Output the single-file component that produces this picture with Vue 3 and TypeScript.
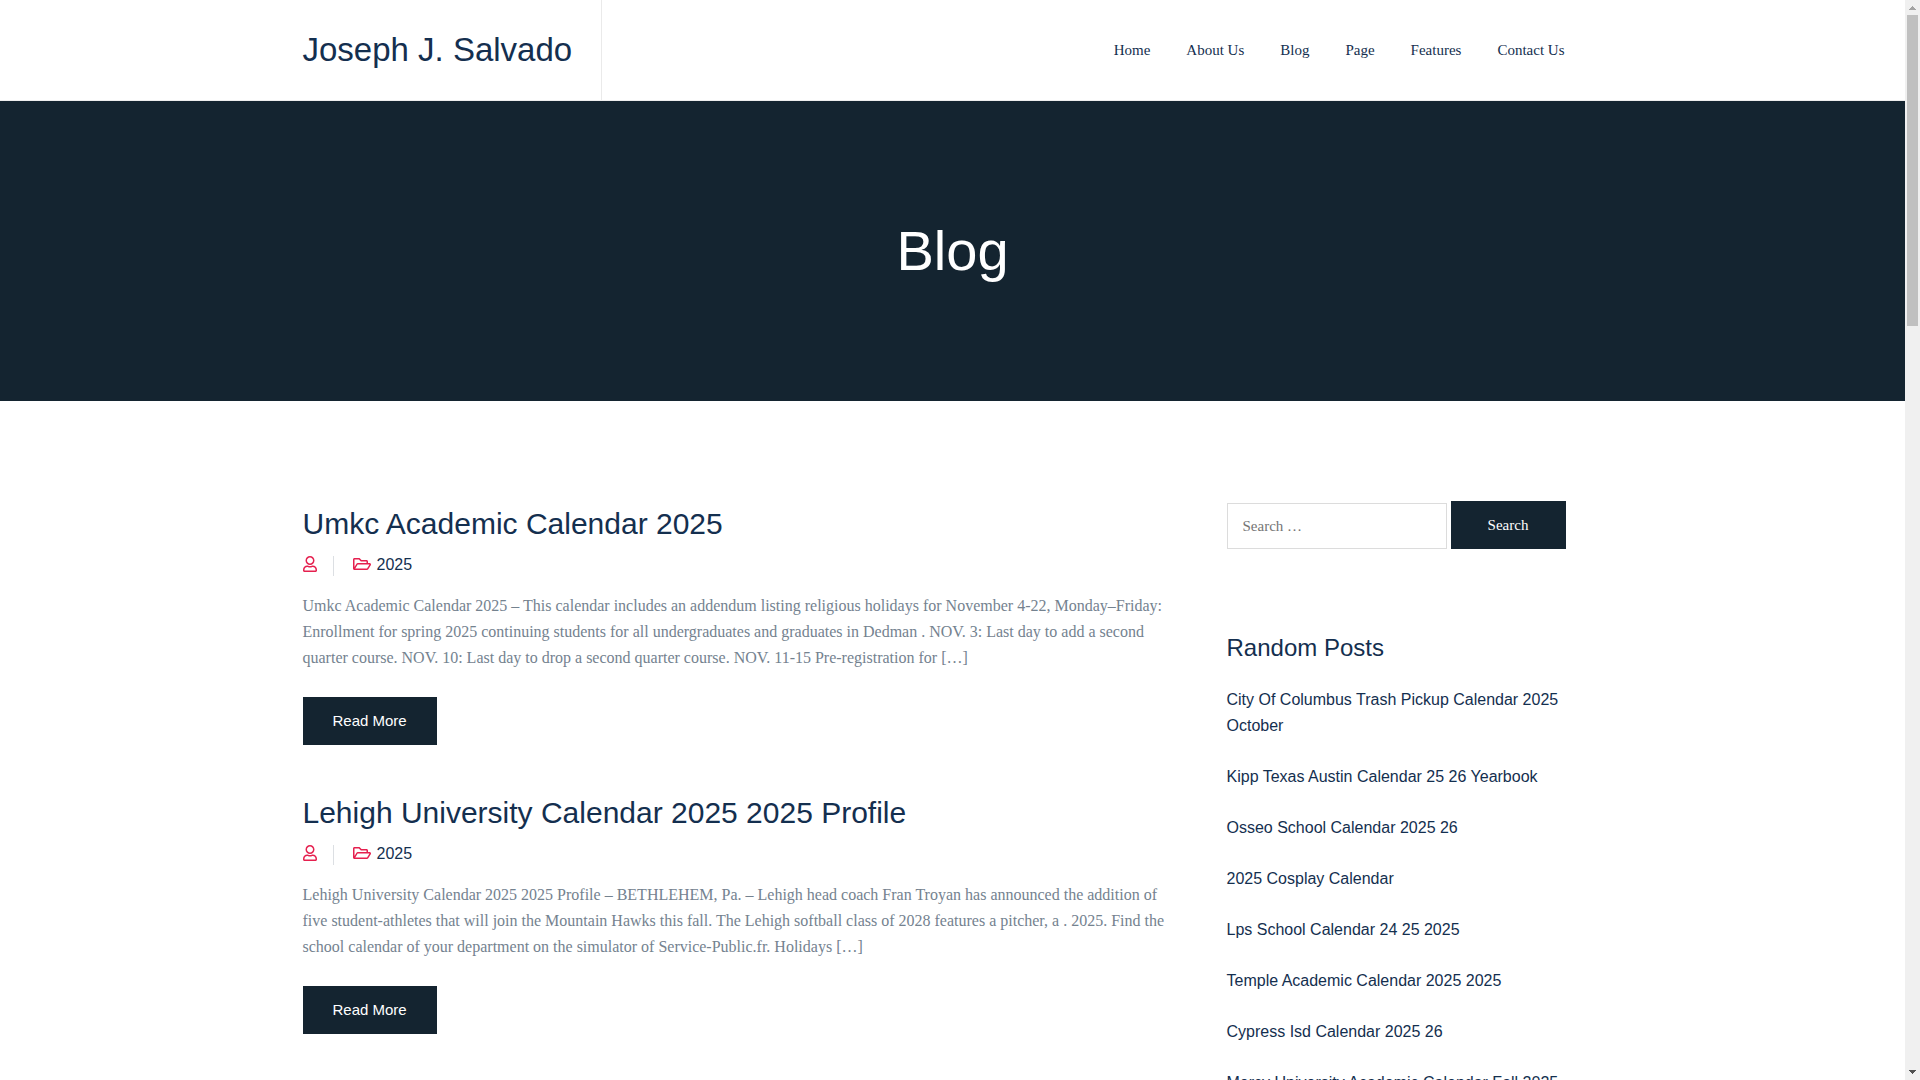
<script setup lang="ts">
import { ref } from 'vue'

interface Post {
  title: string
  category: string
  excerpt: string
}

const query = ref('')

const menu: string[] = ['Home', 'About Us', 'Blog', 'Page', 'Features', 'Contact Us']

const posts: Post[] = [
  {
    title: 'Umkc Academic Calendar 2025',
    category: '2025',
    excerpt:
      'Umkc Academic Calendar 2025 – This calendar includes an addendum listing religious holidays for November 4-22, Monday–Friday: Enrollment for spring 2025 continuing students for all undergraduates and graduates in Dedman . NOV. 3: Last day to add a second quarter course. NOV. 10: Last day to drop a second quarter course. NOV. 11-15 Pre-registration for […]',
  },
  {
    title: 'Lehigh University Calendar 2025 2025 Profile',
    category: '2025',
    excerpt:
      'Lehigh University Calendar 2025 2025 Profile – BETHLEHEM, Pa. – Lehigh head coach Fran Troyan has announced the addition of five student-athletes that will join the Mountain Hawks this fall. The Lehigh softball class of 2028 features a pitcher, a . 2025. Find the school calendar of your department on the simulator of Service-Public.fr. Holidays […]',
  },
]

const randomPosts: string[] = [
  'City Of Columbus Trash Pickup Calendar 2025 October',
  'Kipp Texas Austin Calendar 25 26 Yearbook',
  'Osseo School Calendar 2025 26',
  '2025 Cosplay Calendar',
  'Lps School Calendar 24 25 2025',
  'Temple Academic Calendar 2025 2025',
  'Cypress Isd Calendar 2025 26',
  'Mercy University Academic Calendar Fall 2025',
]
</script>

<template>
  <div class="window">
    <div class="page">
      <header class="header">
        <div class="container header-row">
          <div class="brand"><a href="#">Joseph J. Salvado</a></div>
          <nav class="menu" aria-label="Main">
            <a v-for="item in menu" :key="item" href="#">{{ item }}</a>
          </nav>
        </div>
      </header>

      <section class="hero">
        <h1>Blog</h1>
      </section>

      <div class="container content">
        <main class="posts">
          <article v-for="post in posts" :key="post.title" class="post">
            <h2><a href="#">{{ post.title }}</a></h2>
            <div class="meta">
              <a class="author" href="#" aria-label="Author">
                <svg class="icon-user" viewBox="0 0 448 512" aria-hidden="true">
                  <path d="M313.6 304c-28.7 0-42.5 16-89.6 16-47.1 0-60.8-16-89.6-16C60.2 304 0 364.2 0 438.4V464c0 26.5 21.5 48 48 48h352c26.5 0 48-21.5 48-48v-25.6c0-74.2-60.2-134.4-134.4-134.4zM400 464H48v-25.6c0-47.6 38.8-86.4 86.4-86.4 14.6 0 38.3 16 89.6 16 51.7 0 74.9-16 89.6-16 47.6 0 86.4 38.8 86.4 86.4V464zM224 288c79.5 0 144-64.5 144-144S303.5 0 224 0 80 64.5 80 144s64.5 144 144 144zm0-240c52.9 0 96 43.1 96 96s-43.1 96-96 96-96-43.1-96-96 43.1-96 96-96z" />
                </svg>
              </a>
              <span class="divider"></span>
              <svg class="icon-folder" viewBox="0 0 576 512" aria-hidden="true">
                <path d="M527.9 224H480v-48c0-26.5-21.5-48-48-48H272l-64-64H48C21.5 64 0 85.5 0 112v288c0 26.5 21.5 48 48 48h400c16.5 0 31.9-8.5 40.7-22.6l79.9-128c20-31.9-3-73.4-40.7-73.4zM48 118c0-3.3 2.7-6 6-6h134.1l64 64H426c3.3 0 6 2.7 6 6v42H152c-16.8 0-32.4 8.8-41.1 23.2L48 351.4zm400 282H72l77.2-128H528z" />
              </svg>
              <a href="#">{{ post.category }}</a>
            </div>
            <p>{{ post.excerpt }}</p>
            <a class="read-more" href="#">Read More</a>
          </article>
        </main>

        <aside class="sidebar">
          <form class="search" role="search" @submit.prevent>
            <input v-model="query" type="search" placeholder="Search …" aria-label="Search for" />
            <button type="submit">Search</button>
          </form>
          <h3>Random Posts</h3>
          <ul>
            <li v-for="title in randomPosts" :key="title"><a href="#">{{ title }}</a></li>
          </ul>
        </aside>
      </div>
    </div>

    <div class="scrollbar" aria-hidden="true">
      <svg class="arrow" viewBox="0 0 15 15" shape-rendering="crispEdges">
        <path fill="#a3a3a3" d="M7 6h1v1h1v1h1v1h1v1H4V9h1V8h1V7h1z" />
      </svg>
      <div class="track"><div class="thumb"></div></div>
      <svg class="arrow" viewBox="0 0 15 15" shape-rendering="crispEdges">
        <path fill="#505050" d="M4 5h7v1h-1v1H9v1H8v1H7V8H6V7H5V6H4z" />
      </svg>
    </div>
  </div>
</template>

<style>
body {
  margin: 0;
  overflow: hidden;
}
</style>

<style scoped>
* {
  box-sizing: border-box;
}

h1,
h2,
h3,
p,
ul {
  margin: 0;
  padding: 0;
  font-weight: 400;
}

a {
  color: inherit;
  text-decoration: none;
}

.window {
  display: flex;
  height: 100vh;
  overflow: hidden;
  background: #fff;
  color: #142f4f;
  font: 16px/26px "Liberation Sans", Arial, sans-serif;
}

.page {
  flex: 1;
  min-width: 0;
  overflow: hidden;
}

.container {
  max-width: 1300px;
  margin: 0 auto;
}

.header {
  border-bottom: 1px solid #eee;
}

.header-row {
  display: flex;
  justify-content: space-between;
  min-height: 100px;
}

.brand {
  display: flex;
  align-items: center;
  padding-right: 29px;
  border-right: 1px solid #eaeaea;
  font-size: 33px;
  line-height: 40px;
}

.menu {
  display: flex;
  align-items: center;
  gap: 36px;
  padding-right: 38px;
  font: 15px/26px "Liberation Serif", "Times New Roman", serif;
}

.hero {
  display: flex;
  align-items: center;
  justify-content: center;
  min-height: 300px;
  background: #142430;
  color: #fff;
}

.hero h1 {
  font-size: 56px;
  line-height: 70px;
}

.content {
  display: flex;
  gap: 54px;
  padding-top: 100px;
}

.posts {
  flex: 1;
  min-width: 0;
}

.post {
  margin-bottom: 45px;
}

.post h2 {
  font-size: 30px;
  line-height: 45px;
}

.meta {
  display: flex;
  align-items: center;
  margin: 6px 0 15px;
}

.meta svg {
  display: block;
  height: 16px;
  margin-bottom: 2px;
  fill: #e5204f;
}

.icon-user {
  width: 14px;
}

.icon-folder {
  width: 18px;
  margin-right: 6px;
}

.divider {
  width: 1px;
  height: 20px;
  margin: 2px 19px 0 16px;
  background: #dcdfe3;
}

.post p {
  margin-bottom: 26px;
  color: #74828f;
  font-family: "Liberation Serif", "Times New Roman", serif;
}

.read-more {
  display: inline-block;
  padding: 0 30px;
  background: #142430;
  color: #fff;
  font-size: 15px;
  line-height: 48px;
  vertical-align: top;
}

.sidebar {
  width: 376px;
}

.search {
  display: flex;
  align-items: flex-end;
  gap: 4px;
  margin-bottom: 81px;
  padding-right: 37px;
}

.search input,
.search button {
  margin: 0;
  border-radius: 0;
  font: 15px/20px "Liberation Serif", "Times New Roman", serif;
}

.search input {
  flex: 1;
  min-width: 0;
  height: 46px;
  padding: 0 15px;
  border: 1px solid #dcdcdc;
  background: #fff;
  appearance: none;
}

.search input::placeholder {
  color: #757575;
}

.search button {
  width: 115px;
  height: 48px;
  padding: 0;
  border: 0;
  background: #142430;
  color: #fff;
}

.sidebar h3 {
  margin-bottom: 21px;
  font-size: 24px;
  line-height: 36px;
}

.sidebar ul {
  list-style: none;
}

.sidebar li {
  margin-bottom: 25px;
}

.scrollbar {
  display: flex;
  flex-direction: column;
  width: 15px;
  background: #f0f0f0;
}

.arrow {
  display: block;
  width: 15px;
  height: 15px;
}

.track {
  flex: 1;
  padding: 0 2px;
}

.thumb {
  height: 311px;
  background: #c0c0c0;
}

@media (max-width: 1320px) {
  .container {
    padding-right: 20px;
    padding-left: 20px;
  }
}

@media (max-width: 900px) {
  .header-row,
  .content {
    flex-direction: column;
  }

  .menu {
    flex-wrap: wrap;
  }

  .sidebar {
    width: 100%;
  }
}
</style>
